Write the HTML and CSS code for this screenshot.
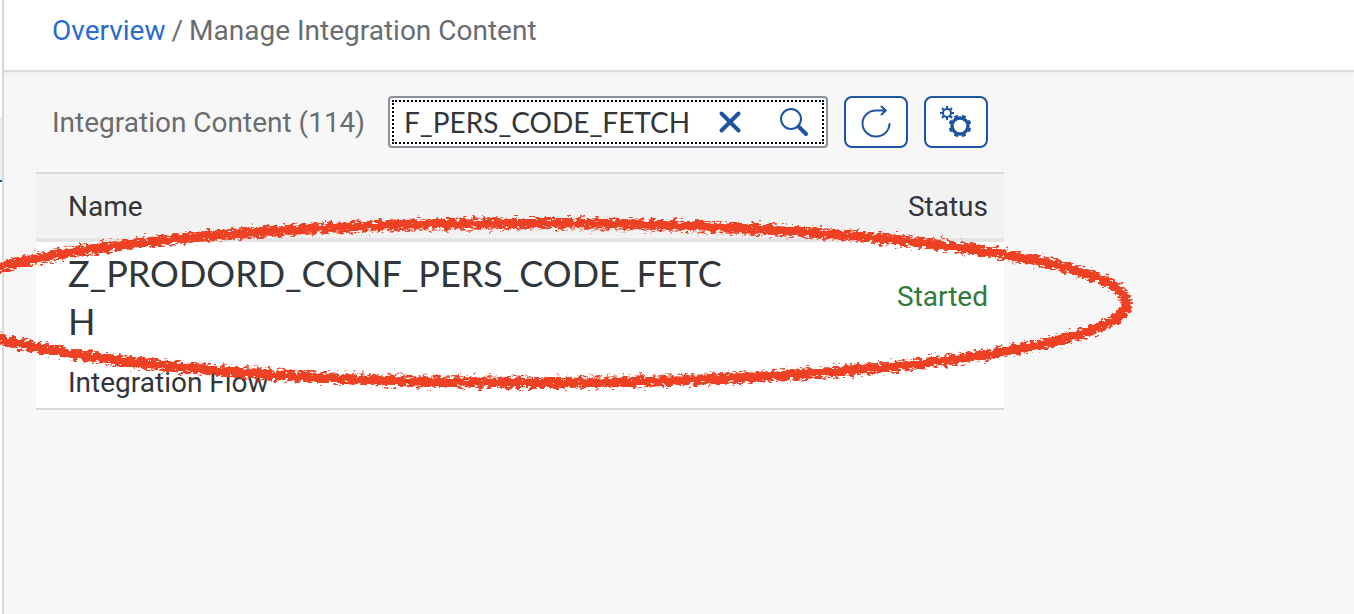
FILE: index.html
```
<!DOCTYPE html>
<html lang="en">
<head>
<meta charset="utf-8">
<title>Manage Integration Content</title>
<link rel="stylesheet" href="styles.css">
</head>
<body>
<div class="shell">
  <aside class="rail"><div class="rail-selected"></div></aside>
  <main class="main">
    <header class="page-header">
      <nav class="breadcrumb" aria-label="Breadcrumb">
        <a class="crumb-link" href="#">Overview</a>
        <span class="crumb-sep">/</span>
        <span class="crumb-current">Manage Integration Content</span>
      </nav>
    </header>
    <section class="content">
      <div class="toolbar">
        <h1 class="toolbar-title">Integration Content (114)</h1>
        <form class="search">
          <input class="search-input" type="text" aria-label="Search" value="F_PERS_CODE_FETCH">
          <button class="search-button" type="button" aria-label="Clear">
            <svg width="32" height="32" viewBox="0 0 32 32"><path d="M7.500 7.500 24.500 24.500M24.500 7.500 7.500 24.500" fill="none" stroke="currentColor" stroke-width="4" stroke-linecap="round"/></svg>
          </button>
          <button class="search-button" type="submit" aria-label="Search">
            <svg width="32" height="32" viewBox="0 0 32 32"><circle cx="13" cy="13" r="10" fill="none" stroke="currentColor" stroke-width="2"/><path d="m20.500 20.500 7.500 7.500" stroke="currentColor" stroke-width="4" stroke-linecap="round"/></svg>
          </button>
        </form>
        <button class="icon-button" type="button" aria-label="Refresh">
          <svg width="32" height="32" viewBox="0 0 32 32"><path d="M29.500 18A13.500 13 0 1 1 16 4.500H25.500M21.500.500 25.800 4.500 21.500 8.500" fill="none" stroke="currentColor" stroke-width="2" stroke-linecap="round" stroke-linejoin="round"/></svg>
        </button>
        <button class="icon-button" type="button" aria-label="Settings">
          <svg width="32" height="32" viewBox="0 0 32 32" fill="none" stroke="currentColor">
            <circle cx="7" cy="7" r="4" stroke-width="2"/>
            <path d="M7 3V0M7 11v3M3 7H0M11 7h3M4.200 4.200 2 2M9.800 4.200 12 2M4.200 9.800 2 12M9.800 9.800 12 12" stroke-width="2"/>
            <circle cx="20" cy="20" r="8" stroke-width="3.400"/>
            <g stroke-width="4">
              <path d="m16.700 12.100-1-2.600M23.300 12.100l1-2.600M16.700 27.900l-1 2.600M23.300 27.900l1 2.600M12.100 16.700l-2.600-1M12.100 23.300l-2.600 1M27.900 16.700l2.600-1M27.900 23.300l2.600 1"/>
            </g>
          </svg>
        </button>
      </div>
      <table class="table">
        <thead>
          <tr><th class="col-name" scope="col">Name</th><th class="col-status" scope="col">Status</th></tr>
        </thead>
        <tbody>
          <tr>
            <td class="col-name">
              <div class="item-name">Z_PRODORD_CONF_PERS_CODE_FETCH</div>
              <div class="item-type">Integration Flow</div>
            </td>
            <td class="col-status item-status">Started</td>
          </tr>
        </tbody>
      </table>
    </section>
  </main>
  <svg class="annotation" width="1140" height="190" viewBox="0 210 1140 190" aria-hidden="true">
    <defs>
      <filter id="chalk" filterUnits="userSpaceOnUse" x="-80" y="200" width="1230" height="210">
        <feTurbulence type="fractalNoise" baseFrequency="0.18 0.4" numOctaves="3" seed="7" result="n"/>
        <feDisplacementMap in="SourceGraphic" in2="n" scale="12" xChannelSelector="R" yChannelSelector="G"/>
      </filter>
    </defs>
    <g filter="url(#chalk)" fill="none" stroke="#ee4023">
      <ellipse cx="532" cy="303" rx="595" ry="80" stroke-width="10"/>
      <ellipse cx="532" cy="303" rx="589" ry="74" stroke-width="1" stroke-dasharray="5 3 2 4"/>
    </g>
  </svg>
</div>
</body>
</html>
```
FILE: styles.css
```
* { box-sizing: border-box; }
body {
  margin: 0;
  font-family: Roboto, "Liberation Sans", sans-serif;
  font-size: 28px;
  line-height: 34px;
  color: #32363a;
  background: #f7f7f7;
}
.shell { position: relative; display: flex; min-height: 100vh; overflow: hidden; }
.rail { width: 4px; flex: none; padding-top: 118px; border-right: 2px solid #d9d9d9; background: #fff; }
.rail-selected { height: 64px; background: #e5f0fa; border-bottom: 2px solid #1f54a0; }
.main { flex: 1; min-width: 0; }
.page-header {
  padding: 14px 48px 22px;
  background: #fff;
  border-bottom: 2px solid #d9d9d9;
  box-shadow: 0 2px 4px rgba(0, 0, 0, 0.04);
}
.breadcrumb { display: flex; gap: 6px; color: #6a6d70; }
.crumb-link { color: #2a6bce; text-decoration: none; }
.content { max-width: 1032px; padding: 24px 32px; }
.toolbar { display: flex; align-items: center; gap: 16px; padding: 0 16px; margin-bottom: 24px; }
.toolbar-title { flex: 1; margin: 0; padding-top: 2px; font-size: 28px; font-weight: 400; color: #6a6d70; white-space: nowrap; }
.search {
  display: flex;
  align-items: center;
  width: 440px;
  height: 52px;
  padding: 0 0 0 14px;
  background: #fff;
  border: 2px solid #89919a;
  border-radius: 4px;
  outline: 2px dotted #000;
  outline-offset: -6px;
}
.search-input {
  flex: 1;
  min-width: 0;
  padding: 0;
  border: 0;
  outline: 0;
  background: none;
  font: inherit;
  font-family: Lato, Roboto, sans-serif;
  color: inherit;
}
.search-button {
  display: grid;
  place-items: center;
  width: 64px;
  height: 44px;
  padding: 0;
  border: 0;
  background: none;
  color: #1f54a0;
}
.icon-button {
  display: grid;
  place-items: center;
  width: 64px;
  height: 52px;
  padding: 0;
  background: #fff;
  border: 2px solid #1f54a0;
  border-radius: 8px;
  color: #1f54a0;
}
.icon-button svg { overflow: visible; }
.table { width: 100%; border-collapse: separate; border-spacing: 0; table-layout: fixed; }
.table th {
  padding: 16px 16px 14px;
  font-weight: 400;
  background: #f2f2f2;
  border-top: 2px solid #d9d9d9;
  border-bottom: 4px solid #e4e4e4;
}
.table td { padding: 7px 16px 8px; vertical-align: top; background: #fff; border-bottom: 2px solid #d9d9d9; }
.table .col-name { padding-left: 32px; text-align: left; }
.table .col-status { width: 256px; text-align: right; }
.item-name { font-family: Lato, Roboto, sans-serif; font-size: 36px; line-height: 48px; word-break: break-all; }
.item-type { margin-top: 21px; }
.table .item-status { padding-top: 38px; color: #2f7a3d; }
.annotation { position: absolute; left: 0; top: 210px; pointer-events: none; }
```
